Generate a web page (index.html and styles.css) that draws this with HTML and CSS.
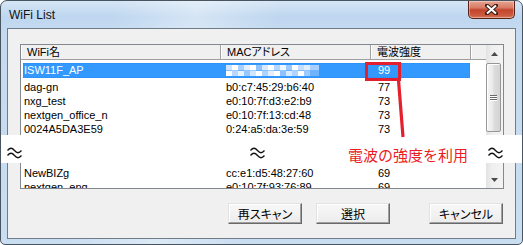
FILE: index.html
```html
<!DOCTYPE html>
<html lang="ja">
<head>
<meta charset="utf-8">
<title>WiFi List</title>
<link rel="stylesheet" href="styles.css">
</head>
<body>
<div class="window">
<div class="titlebar">
<span class="title">WiFi List</span>
<span class="close"><svg width="13" height="11" viewBox="0 0 13 11"><path d="M2 1.5L11 9.5M11 1.5L2 9.5" stroke="#3b2018" stroke-width="4" stroke-linecap="square"/><path d="M2 1.5L11 9.5M11 1.5L2 9.5" stroke="#fff" stroke-width="2"/></svg></span>
</div>
<div class="client">
<div class="list">
<div class="list-main">
<div class="list-head">
<div class="hcell c1">WiFi名</div>
<div class="hcell c2">MACアドレス</div>
<div class="hcell c3">電波強度</div>
<div class="hcell c4"></div>
</div>
<div class="list-body">
<div class="row sel"><span class="c1">ISW11F_AP</span><span class="c2"><i class="mosaic"></i></span><span class="c3">99</span></div>
<div class="row"><span class="c1">dag-gn</span><span class="c2">b0:c7:45:29:b6:40</span><span class="c3">77</span></div>
<div class="row"><span class="c1">nxg_test</span><span class="c2">e0:10:7f:d3:e2:b9</span><span class="c3">73</span></div>
<div class="row"><span class="c1">nextgen_office_n</span><span class="c2">e0:10:7f:13:cd:48</span><span class="c3">73</span></div>
<div class="row"><span class="c1">0024A5DA3E59</span><span class="c2">0:24:a5:da:3e:59</span><span class="c3">73</span></div>
<div class="gap"></div>
<div class="row"><span class="c1">NewBIZg</span><span class="c2">cc:e1:d5:48:27:60</span><span class="c3">69</span></div>
<div class="row"><span class="c1">nextgen_eng</span><span class="c2">e0:10:7f:93:76:89</span><span class="c3">69</span></div>
</div>
</div>
<div class="scrollbar">
<div class="sb-btn"><svg width="7" height="4" viewBox="0 0 7 4"><path d="M3.5 0L7 4H0z" fill="#4a4a4a"/></svg></div>
<div class="sb-track"><div class="sb-thumb"><i></i><i></i><i></i></div></div>
<div class="sb-btn"><svg width="7" height="4" viewBox="0 0 7 4"><path d="M0 0H7L3.5 4z" fill="#4a4a4a"/></svg></div>
</div>
</div>
<div class="buttons">
<button class="btn">再スキャン</button>
<button class="btn">選択</button>
<button class="btn cancel">キャンセル</button>
</div>
</div>
<div class="band">
<svg class="wave" width="15" height="12" viewBox="0 0 15 12"><path d="M0.5 3.5C3 0.5 5 0.5 7.5 3.5S12 6.5 14.5 3.5M0.5 8.5C3 5.5 5 5.5 7.5 8.5S12 11.5 14.5 8.5" fill="none" stroke="#111" stroke-width="1.3"/></svg>
<svg class="wave w2" width="15" height="12" viewBox="0 0 15 12"><path d="M0.5 3.5C3 0.5 5 0.5 7.5 3.5S12 6.5 14.5 3.5M0.5 8.5C3 5.5 5 5.5 7.5 8.5S12 11.5 14.5 8.5" fill="none" stroke="#111" stroke-width="1.3"/></svg>
<span class="note">電波の強度を利用</span>
<svg class="wave w3" width="15" height="12" viewBox="0 0 15 12"><path d="M0.5 3.5C3 0.5 5 0.5 7.5 3.5S12 6.5 14.5 3.5M0.5 8.5C3 5.5 5 5.5 7.5 8.5S12 11.5 14.5 8.5" fill="none" stroke="#111" stroke-width="1.3"/></svg>
</div>
<div class="mark-box"></div>
<svg class="mark-line" width="523" height="245" viewBox="0 0 523 245"><path d="M398.5 80L403 137" stroke="#e5202e" stroke-width="3.2"/></svg>
</div>
</body>
</html>
```

FILE: styles.css
```css
*{box-sizing:border-box;margin:0;padding:0;}
body{width:523px;height:245px;overflow:hidden;background:#fff;font-family:"Liberation Sans","Noto Sans CJK JP",sans-serif;font-size:11px;color:#000;}

/* window frame */
.window{position:relative;width:523px;height:245px;border:1px solid #48545f;border-radius:7px 7px 5px 5px;padding:0 6px 5px;display:flex;flex-direction:column;overflow:hidden;
background:linear-gradient(100deg,rgba(255,255,255,0) 20%,rgba(255,255,255,.35) 35%,rgba(255,255,255,0) 50%),linear-gradient(180deg,#d6e6f6 0,#bed6ef 16px,#c4daf0 28px,#cadef1 100%);}
.titlebar{height:27px;display:flex;justify-content:space-between;align-items:flex-start;}
.title{margin:7px 0 0 2px;font-size:12px;line-height:14px;color:#111;}
.close{width:47px;height:18px;margin-right:1px;display:flex;align-items:center;justify-content:center;border:1px solid #5a2319;border-top:0;border-radius:0 0 5px 5px;
background:linear-gradient(180deg,#e6a593 0,#d77a63 40%,#c3452d 52%,#cc5a3f 85%,#d97a5c 100%);box-shadow:inset 0 0 0 1px rgba(255,255,255,.35);}

/* client */
.client{flex:1;border:1px solid #6f7d8b;background:#f0f0f0;padding:15px 11px 0 12px;}

.list{width:484px;height:145px;border:1px solid #828790;background:#fff;display:flex;overflow:hidden;}
.list-main{flex:1;overflow:hidden;}
.list-head{display:flex;height:15px;background:#f0f0f0;border-bottom:1px solid #a0a0a0;}
.hcell{height:14px;line-height:14px;padding-left:6px;border-right:1px solid #a0a0a0;box-shadow:inset 1px 0 #fff;white-space:nowrap;font-feature-settings:"palt";}
.hcell.c1{width:200px;}
.hcell.c2{width:150px;}
.hcell.c3{width:100px;}
.hcell.c4{width:15px;border-right:0;}

.list-body{padding-top:3px;}
.row{display:flex;margin-left:2px;width:447px;height:14px;line-height:14px;white-space:nowrap;}
.row span{display:block;padding-left:1px;}
.row .c1{width:202px;}
.row .c2{width:152px;}
.row.sel{height:15px;line-height:15px;margin-bottom:2px;background:#3399ff;color:#fff;outline:1px dotted #cc6600;outline-offset:-1px;}
.gap{height:30px;}
.mosaic{display:block;width:93px;height:11px;margin-top:2px;
background:
linear-gradient(90deg,#cfe4ff 0 6px,#fff 6px 12px,#a9d0ff 12px 18px,#e6f1ff 18px 24px,#fff 24px 30px,#8ec2ff 30px 36px,#d8eaff 36px 42px,#fff 42px 48px,#b5d6ff 48px 54px,#eef6ff 54px 60px,#9ccaff 60px 66px,#fff 66px 72px,#c4deff 72px 78px,#e0eeff 78px 84px,#a6cfff 84px 93px) top/100% 50% no-repeat,
linear-gradient(90deg,#fff 0 6px,#b8d9ff 6px 12px,#e9f3ff 12px 18px,#98c8ff 18px 24px,#d2e7ff 24px 30px,#fff 30px 36px,#aed3ff 36px 42px,#e3efff 42px 48px,#fff 48px 54px,#8fc3ff 54px 60px,#d9ebff 60px 66px,#b2d5ff 66px 72px,#fff 72px 78px,#9fccff 78px 84px,#6fb3ff 84px 93px) bottom/100% 50% no-repeat;}

/* scrollbar */
.scrollbar{width:17px;display:flex;flex-direction:column;background:linear-gradient(90deg,#e2e2e2,#efefef 35%,#f3f3f3);}
.sb-btn{height:17px;display:flex;align-items:center;justify-content:center;}
.sb-track{flex:1;padding-top:1px;}
.sb-thumb{width:15px;height:69px;border:1px solid #979797;border-radius:2px;display:flex;flex-direction:column;align-items:center;justify-content:center;gap:1px;
background:linear-gradient(90deg,#f5f5f5,#e9e9e9 45%,#dcdcdc 55%,#d4d4d4);box-shadow:inset 1px 1px #fff;}
.sb-thumb i{display:block;width:7px;height:1px;background:#6a6a6a;box-shadow:0 1px #fff;}

/* dialog buttons */
.buttons{display:flex;justify-content:flex-end;gap:14px;margin-top:14px;padding-right:1px;}
.btn{width:74px;height:21px;font-family:"Noto Sans CJK JP",sans-serif;font-size:12px;font-feature-settings:"palt";color:#000;
background:linear-gradient(180deg,#f8f8f8,#ececec);border:1px solid;border-color:#e2e2e2 #696969 #696969 #e2e2e2;box-shadow:inset -1px -1px #a0a0a0,inset 1px 1px #fff;}
.btn.cancel{margin-left:25px;}

/* annotation */
.band{position:absolute;left:-1px;top:134px;width:523px;height:28px;background:#fff;display:flex;align-items:flex-start;padding-top:12px;}
.wave{display:block;margin-left:7px;}
.wave.w2{margin-left:228px;}
.wave.w3{margin-left:20px;}
.note{margin-left:83px;font-family:"Noto Sans CJK JP",sans-serif;font-size:15px;line-height:15px;color:#ec1c24;}
.mark-box{position:absolute;left:364px;top:61px;width:36px;height:19px;border:3px solid #e5202e;}
.mark-line{position:absolute;left:-1px;top:-1px;}
```
